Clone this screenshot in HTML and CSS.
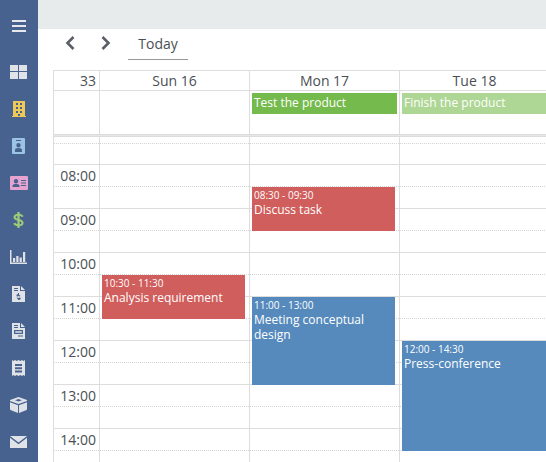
FILE: index.html
```html
<!DOCTYPE html>
<html lang="en">
<head>
<meta charset="utf-8">
<title>Calendar</title>
<link rel="stylesheet" href="styles.css">
</head>
<body>
<div class="app">
  <nav class="sidebar">
    <div class="burger"><svg width="14" height="12" viewBox="0 0 14 12"><path fill="#e6e8ee" d="M0 0h14v2H0zM0 5h14v2H0zM0 10h14v2H0z"/></svg></div>
    <div class="nav-item odd"><svg width="17" height="14" viewBox="0 0 17 14"><path fill="#dfe2e6" d="M0 0h8v6H0zM9 0h8v6H9zM0 7h8v7H0zM9 7h8v7H9z"/></svg></div>
    <div class="nav-item"><svg width="16" height="16" viewBox="0 0 16 16"><path fill="#eec957" fill-rule="evenodd" d="M2 0h12v15h1v1H1v-1h1zM5 2v2h2V2zM9 2v2h2V2zM5 6v2h2V6zM9 6v2h2V6zM5 10v2h2v-2zM9 10v2h2v-2zM7 13v2h2v-2z"/></svg></div>
    <div class="nav-item odd"><svg width="13" height="16" viewBox="0 0 13 16"><path fill="#9cc2e4" fill-rule="evenodd" d="M1 0h11a1 1 0 0 1 1 1v14a1 1 0 0 1-1 1H1a1 1 0 0 1-1-1V1a1 1 0 0 1 1-1zM4 2v1h5V2zM6.500 5a2.200 2.200 0 1 0 0 4.400 2.200 2.200 0 0 0 0-4.400zM3 14h7v-2c0-1.300-1-2-3.500-2S3 10.700 3 12z"/></svg></div>
    <div class="nav-item"><svg width="18" height="14" viewBox="0 0 18 14"><path fill="#e4a4cf" fill-rule="evenodd" d="M1 0h16a1 1 0 0 1 1 1v12a1 1 0 0 1-1 1H1a1 1 0 0 1-1-1V1a1 1 0 0 1 1-1zM6 3a2.200 2.200 0 1 0 0 4.400A2.200 2.200 0 0 0 6 3zM2.500 11h7V9.800C9.500 8.600 8 8 6 8s-3.500.6-3.500 1.800zM11 4v1h5V4zM11 6.500v1h5v-1zM11 9v1h5V9z"/></svg></div>
    <div class="nav-item odd"><svg width="11" height="16" viewBox="0 0 11 17"><path fill="none" stroke="#9dcb78" stroke-width="2.200" d="M9.800 5C9.300 3.500 7.500 3 5.500 3 3 3 1.300 4 1.300 5.700c0 3.800 8.500 1.800 8.500 5.600 0 1.700-1.800 2.700-4.300 2.700-2.200 0-4-.7-4.500-2.200"/><path fill="#9dcb78" d="M4.300 0h2.400v17H4.300z"/></svg></div>
    <div class="nav-item odd"><svg width="17" height="14" viewBox="0 0 17 14"><path fill="#dfe2e6" d="M0 0h1.500v12.500H17V14H0zM3 8h2.200v4H3zM6.300 6h2.200v6H6.300zM9.600 7.500h2.200V12H9.600zM13 2h2.200v10H13z"/></svg></div>
    <div class="nav-item odd"><svg width="13" height="16" viewBox="0 0 13 16"><path fill="#dfe2e6" fill-rule="evenodd" d="M0 0h8v5h5v11H0zM9 0l4 4H9zM2 2v1h4V2zM2 4v1h4V4zM6 7v1.100c-1 .2-1.500.7-1.500 1.400 0 1.800 3.300 1 3.300 2 0 .3-.4.500-1.100.5-.6 0-1-.2-1.200-.6l-1 .4c.2.600.8 1 1.500 1.100V14h1v-.1c1-.2 1.700-.8 1.700-1.500 0-1.900-3.300-1.100-3.300-2 0-.3.400-.5 1-.5.500 0 .9.200 1.100.5l.9-.4c-.2-.5-.7-.9-1.400-1V7z"/></svg></div>
    <div class="nav-item odd"><svg width="13" height="16" viewBox="0 0 13 16"><path fill="#dfe2e6" fill-rule="evenodd" d="M0 0h8v5h5v11H0zM9 0l4 4H9zM2 2v1h4V2zM2 4v1h4V4zM2 7v4h9V7zM3.200 8.200h6.600v1.600H3.200zM6 12.500v1h5v-1z"/></svg></div>
    <div class="nav-item odd"><svg width="13" height="16" viewBox="0 0 13 16"><path fill="#dfe2e6" fill-rule="evenodd" d="M0 0l1.500 1L3 0l1.700 1L6.500 0l1.800 1L10 0l1.500 1L13 0v16l-1.500-1-1.500 1-1.700-1-1.800 1-1.800-1L3 16l-1.500-1L0 16zM3 4v2h7V4zM3 7.200v2h7v-2zM3 10.400v2h7v-2z"/></svg></div>
    <div class="nav-item odd"><svg width="17" height="16" viewBox="0 0 17 16"><path fill="#dfe2e6" d="M8.500 0L17 3v1L8.500 7 0 4V3zM0 5.300L8 8.200V16L1 13.200 0 12.500zM17 5.300L9 8.200V16l7-2.800 1-.7z"/><path fill="#47628f" d="M5 3.300l3.500-1.200L12 3.300 8.500 4.600z"/></svg></div>
    <div class="nav-item odd"><svg width="17" height="12" viewBox="0 0 17 12"><path fill="#dfe2e6" d="M0 0h17L8.500 6.500zM0 1.800L8.500 8.300 17 1.800V12H0z"/></svg></div>
  </nav>
  <main class="content">
    <div class="topbar"></div>
    <div class="toolbar">
      <span class="arrow"><svg width="10" height="14" viewBox="0 0 10 14"><path fill="none" stroke="#5a5f66" stroke-width="2.600" d="M8.500 1L2.500 7l6 6"/></svg></span>
      <span class="arrow"><svg width="10" height="14" viewBox="0 0 10 14"><path fill="none" stroke="#5a5f66" stroke-width="2.600" d="M1.500 1l6 6-6 6"/></svg></span>
      <span class="today">Today</span>
    </div>
    <div class="calendar">
      <div class="head-row">
        <div class="week cell">33</div>
        <div class="day cell">Sun 16</div>
        <div class="day cell">Mon 17</div>
        <div class="day cell">Tue 18</div>
      </div>
      <div class="allday-row">
        <div class="time-col cell"></div>
        <div class="day-col cell"></div>
        <div class="day-col cell"><div class="allday green">Test the product</div></div>
        <div class="day-col cell"><div class="allday light">Finish the product</div></div>
      </div>
      <div class="divider"></div>
      <div class="body">
        <div class="times">
          <div class="slot half"></div><div class="slot"></div>
          <div class="slot half"><span class="hour">08:00</span></div><div class="slot"></div>
          <div class="slot half"><span class="hour">09:00</span></div><div class="slot"></div>
          <div class="slot half"><span class="hour">10:00</span></div><div class="slot"></div>
          <div class="slot half"><span class="hour">11:00</span></div><div class="slot"></div>
          <div class="slot half"><span class="hour">12:00</span></div><div class="slot"></div>
          <div class="slot half"><span class="hour">13:00</span></div><div class="slot"></div>
          <div class="slot half"><span class="hour">14:00</span></div><div class="slot"></div>
        </div>
        <div class="column">
          <div class="slot half"></div><div class="slot"></div><div class="slot half"></div><div class="slot"></div><div class="slot half"></div><div class="slot"></div><div class="slot half"></div><div class="slot"></div><div class="slot half"></div><div class="slot"></div><div class="slot half"></div><div class="slot"></div><div class="slot half"></div><div class="slot"></div><div class="slot half"></div><div class="slot"></div>
          <div class="event red ev-sun"><div class="ev-time">10:30 - 11:30</div><div class="ev-title">Analysis requirement</div></div>
        </div>
        <div class="column">
          <div class="slot half"></div><div class="slot"></div><div class="slot half"></div><div class="slot"></div><div class="slot half"></div><div class="slot"></div><div class="slot half"></div><div class="slot"></div><div class="slot half"></div><div class="slot"></div><div class="slot half"></div><div class="slot"></div><div class="slot half"></div><div class="slot"></div><div class="slot half"></div><div class="slot"></div>
          <div class="event red ev-mon1"><div class="ev-time">08:30 - 09:30</div><div class="ev-title">Discuss task</div></div>
          <div class="event blue ev-mon2"><div class="ev-time">11:00 - 13:00</div><div class="ev-title">Meeting conceptual design</div></div>
        </div>
        <div class="column">
          <div class="slot half"></div><div class="slot"></div><div class="slot half"></div><div class="slot"></div><div class="slot half"></div><div class="slot"></div><div class="slot half"></div><div class="slot"></div><div class="slot half"></div><div class="slot"></div><div class="slot half"></div><div class="slot"></div><div class="slot half"></div><div class="slot"></div><div class="slot half"></div><div class="slot"></div>
          <div class="event blue ev-tue"><div class="ev-time">12:00 - 14:30</div><div class="ev-title">Press-conference</div></div>
        </div>
      </div>
    </div>
  </main>
</div>
</body>
</html>
```
FILE: styles.css
```css
* { box-sizing: border-box; }
html, body { margin: 0; height: 100%; overflow: hidden; background: #fff; }
body { font-family: "Open Sans", "Noto Sans", sans-serif; color: #4a4f55; }
.app { display: flex; width: 546px; height: 462px; overflow: hidden; }

.sidebar { width: 38px; flex: none; background: #47628f; display: flex; flex-direction: column; align-items: center; }
.burger { height: 54px; padding-bottom: 2px; display: flex; align-items: center; justify-content: center; }
.burger svg { display: block; }
.nav-item { height: 37px; width: 38px; padding-bottom: 1px; flex: none; display: flex; align-items: center; justify-content: center; }
.nav-item svg { display: block; }
.nav-item.odd svg { margin-right: 1px; }

.content { flex: 1; min-width: 0; overflow: hidden; }
.topbar { height: 29px; background: #e8ebec; }
.toolbar { height: 41px; padding-left: 27px; display: flex; align-items: flex-start; }
.arrow { width: 36px; height: 28px; display: flex; align-items: center; }
.arrow svg { display: block; }
.today { width: 60px; height: 31px; margin-left: -9px; padding-top: 5px; border-bottom: 1px solid #999; text-align: center; font-size: 14px; line-height: 20px; color: #4a4f55; }

.calendar { margin-left: 15px; width: 600px; border-top: 1px solid #ddd; }
.head-row, .allday-row, .body { display: flex; }
.cell { border-left: 1px solid #ddd; flex: none; }
.head-row { height: 20px; border-bottom: 1px solid #ddd; font-size: 14px; line-height: 20px; }
.week { width: 46px; text-align: right; padding-right: 3px; }
.day { width: 150px; text-align: center; }
.allday-row { height: 43px; }
.time-col { width: 46px; }
.day-col { width: 150px; padding: 2px 2px 0; }
.allday { height: 21px; margin-right: 0; padding-left: 2px; font-size: 12px; line-height: 20px; color: #fff; }
.day-col:last-child .allday { width: 146px; }
.green { background: #75ba4c; }
.light { background: #aed694; }
.divider { height: 3px; background: #e6e6e6; border-top: 1px solid #ddd; border-bottom: 1px solid #ddd; }

.times { width: 46px; flex: none; border-left: 1px solid #ddd; }
.column { width: 150px; flex: none; border-left: 1px solid #ddd; position: relative; }
.slot { height: 22px; border-bottom: 1px solid #ddd; position: relative; }
.slot.half { border-bottom: 1px dotted #d4d4d4; }
.slot:first-child { height: 7px; }
.slot:nth-child(2) { height: 21px; }
.hour { display: block; text-align: right; padding-right: 3px; padding-top: 1px; font-size: 14px; line-height: 20px; }

.event { position: absolute; color: #fff; padding: 2px 2px 0; overflow: hidden; }
.ev-time { font-size: 10px; line-height: 13px; }
.ev-title { font-size: 12px; line-height: 15px; }
.red { background: #d05e5c; }
.blue { background: #568abc; }
.ev-sun { left: 2px; top: 138px; width: 143px; height: 44px; }
.ev-mon1 { left: 2px; top: 50px; width: 143px; height: 44px; }
.ev-mon2 { left: 2px; top: 160px; width: 143px; height: 88px; }
.ev-tue { left: 2px; top: 204px; width: 146px; height: 110px; }
```
